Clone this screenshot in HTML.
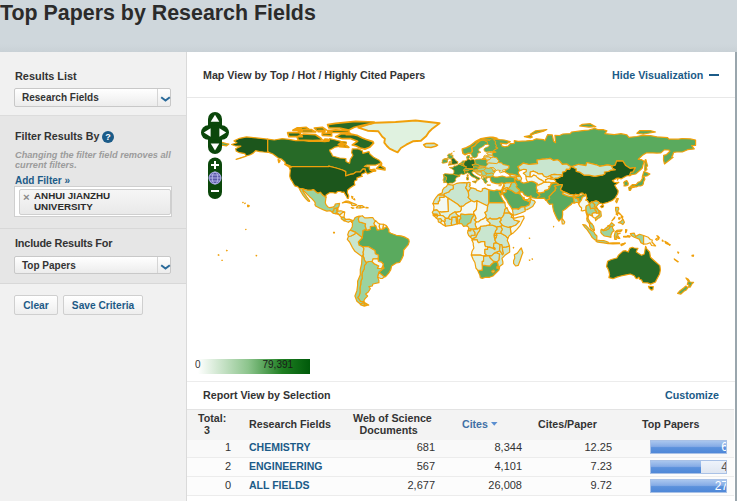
<!DOCTYPE html>
<html><head><meta charset="utf-8">
<style>
*{margin:0;padding:0;box-sizing:border-box}
html,body{width:737px;height:501px;overflow:hidden;background:#f0f0f0;font-family:"Liberation Sans",sans-serif;color:#333;position:relative}
.a{position:absolute;white-space:nowrap}
.hdr{left:0;top:0;width:737px;height:52px;background:linear-gradient(#cfd7dc 85%,#c9d1d6)}
.title{left:0;top:0;font-size:21.4px;font-weight:bold;color:#2b2b2b;line-height:26px}
.side{left:0;top:52px;width:186px;height:449px;background:#f1f1f1}
.sbr{left:186px;top:52px;width:1px;height:449px;background:#dadada}
.sec2{left:0;top:114.5px;width:186px;height:113.5px;background:#e6e6e6;border-top:1.5px solid #dcdcdc}
.sec3{left:0;top:228px;width:186px;height:56px;background:#e6e6e6;border-top:1px solid #d8d8d8;border-bottom:1px solid #d8d8d8}
.lbl{font-size:10.9px;font-weight:bold;color:#333}
.sel{background:linear-gradient(#fff,#ececec);border:1px solid #c8c8c8;border-radius:2px}
.sel .t{position:absolute;left:7px;font-size:10px;font-weight:bold;color:#333}
.sel .dv{position:absolute;right:0;top:0;bottom:0;width:13px;border-left:1px solid #d5d5d5}
.btn{background:linear-gradient(#fff,#eee);border:1px solid #cfcfcf;border-radius:2px;font-size:10.2px;font-weight:bold;color:#1d5a86;text-align:center}
.main{left:187px;top:52px;width:548px;height:449px;background:#fff}
.rb{left:735px;top:52px;width:2px;height:449px;background:#9aa6ad}
.blue{color:#1b5b88}
.th{font-size:10.7px;font-weight:bold;color:#333}
.num{font-size:11px;color:#333;text-align:right}
.bar{left:650px;width:77px;height:14px;background:linear-gradient(#eef3fb,#dfe6f1);border:1px solid #a9c1e6;overflow:hidden}
.fill{position:absolute;left:0;top:0;bottom:0;background:linear-gradient(#a9c6ee,#86ace6 45%,#5b91dc 55%,#4f88d8)}
.bn{position:absolute;right:-2px;top:0;font-size:12px;color:#fff;line-height:13px}
</style></head><body>
<div class="a hdr"></div>
<div class="a title">Top Papers by Research Fields</div>
<div class="a side"></div>
<div class="a sec2"></div>
<div class="a sec3"></div>
<div class="a sbr"></div>

<div class="a lbl" style="left:15px;top:70px">Results List</div>
<div class="a sel" style="left:14px;top:88px;width:157px;height:19px"><span class="t" style="top:3px">Research Fields</span><div class="dv"><svg style="position:absolute;left:1.5px;top:6.5px" width="11" height="6"><path d="M1.2,1.2L5.5,4.6L9.8,1.2" fill="none" stroke="#2a6a9a" stroke-width="2"/></svg></div></div>

<div class="a lbl" style="left:15px;top:130px;font-size:10.7px">Filter Results By</div>
<div class="a" style="left:102px;top:131px;width:12px;height:12px;border-radius:50%;background:#1b5b88;color:#fff;font-size:9px;font-weight:bold;text-align:center;line-height:12px">?</div>
<div class="a" style="left:15px;top:149.5px;font-size:9.2px;font-style:italic;font-weight:bold;color:#9c9c9c;line-height:10.4px">Changing the filter field removes all<br>current filters.</div>
<div class="a blue" style="left:15px;top:175px;font-size:10px;font-weight:bold">Add Filter »</div>
<div class="a" style="left:14px;top:186px;width:158px;height:31px;background:#fff;border:1px solid #cfcfcf"></div>
<div class="a" style="left:19px;top:189px;width:152px;height:26px;background:linear-gradient(#f6f6f6,#e9e9e9);border:1px solid #cfcfcf;border-radius:2px"></div>
<div class="a" style="left:23px;top:190px;font-size:11.5px;line-height:14px;color:#8a8a8a;font-weight:bold">×</div>
<div class="a" style="left:34px;top:191px;font-size:9.8px;font-weight:bold;color:#2b2b2b;line-height:10.5px">ANHUI JIANZHU<br>UNIVERSITY</div>

<div class="a lbl" style="left:15px;top:237px;letter-spacing:-0.2px">Include Results For</div>
<div class="a sel" style="left:14px;top:256px;width:157px;height:18px"><span class="t" style="top:2.5px">Top Papers</span><div class="dv"><svg style="position:absolute;left:1.5px;top:6.5px" width="11" height="6"><path d="M1.2,1.2L5.5,4.6L9.8,1.2" fill="none" stroke="#2a6a9a" stroke-width="2"/></svg></div></div>

<div class="a btn" style="left:14px;top:295px;width:44px;height:20px;line-height:20px">Clear</div>
<div class="a btn" style="left:63px;top:295px;width:80px;height:20px;line-height:20px">Save Criteria</div>

<div class="a main"></div>
<div class="a rb"></div>
<div class="a th" style="left:203px;top:69px">Map View by Top / Hot / Highly Cited Papers</div>
<div class="a blue" style="left:612px;top:69px;font-size:10.7px;font-weight:bold">Hide Visualization</div>
<div class="a" style="left:709px;top:74px;width:10px;height:2px;background:#1b5b88"></div>
<div class="a" style="left:187px;top:97px;width:548px;height:1px;background:#e8e8e8"></div>

<!-- MAP --><svg class="a" style="left:0;top:0" width="737" height="501" viewBox="0 0 737 501"><defs><clipPath id="mc"><rect x="187" y="99" width="547" height="282"/></clipPath></defs><g clip-path="url(#mc)" stroke="#f0a00a" stroke-width="1.2" stroke-linejoin="round"><path fill="#5aaa5e" d="M496.7,138.9 499.6,139.6 504.3,140.0 510.3,141.7 506.3,143.9 500.3,143.2 501.6,144.7 502.0,146.1 504.9,146.8 508.3,146.0 510.3,143.7 514.3,143.3 514.3,140.7 518.3,141.3 526.3,140.9 532.9,140.3 536.3,138.8 543.6,139.6 544.9,140.7 547.6,134.7 552.3,134.9 553.6,141.3 555.6,142.7 554.9,135.3 559.6,135.5 562.9,134.0 570.3,133.6 571.6,132.0 582.3,130.7 588.9,130.0 594.7,128.4 598.3,129.7 603.6,129.7 606.9,130.9 604.9,133.7 614.3,134.7 620.9,133.7 626.9,134.9 628.9,137.3 636.9,136.5 642.3,135.3 650.3,135.6 656.9,136.8 667.6,137.6 668.9,139.1 678.3,139.2 682.3,138.5 690.3,138.9 695.6,140.0 695.6,145.3 691.6,145.7 694.3,148.9 687.6,149.7 682.3,152.0 676.9,152.0 673.6,152.3 672.9,154.9 671.6,157.1 673.2,157.3 664.5,164.0 663.5,160.0 663.6,155.3 666.3,154.7 669.9,151.2 668.9,150.0 664.3,149.9 660.9,152.9 656.9,153.1 652.9,152.9 646.3,152.9 642.9,154.9 638.3,159.3 641.6,159.7 644.1,161.3 642.9,165.3 642.3,168.0 640.3,170.0 635.6,174.0 631.6,174.7 629.9,175.6 629.7,174.8 630.7,172.1 632.9,171.9 635.2,167.6 630.3,168.4 625.7,165.6 622.9,161.1 616.7,160.9 615.3,165.1 612.7,166.0 611.2,165.6 607.6,164.9 599.6,166.3 596.3,164.8 586.7,162.5 586.0,165.6 578.7,164.3 572.9,166.3 572.0,166.5 569.6,166.0 566.7,164.0 562.3,164.3 559.5,160.9 557.6,159.7 553.6,160.5 550.0,158.3 546.9,158.8 542.9,159.2 536.9,160.0 537.6,163.6 532.9,164.1 528.9,164.5 523.3,163.1 520.5,165.2 517.9,166.7 518.7,168.0 519.6,170.0 521.1,170.1 518.9,171.3 518.3,172.9 519.2,174.7 520.3,176.3 517.9,176.3 515.6,175.1 512.9,174.3 508.9,174.1 506.3,172.8 504.4,171.6 506.5,169.5 508.7,168.3 508.9,165.9 506.3,165.3 502.8,164.5 501.5,162.9 498.0,162.5 498.9,160.7 497.6,159.7 496.7,157.9 493.2,157.1 492.5,155.3 492.3,153.5 492.9,152.7 495.9,152.1 493.6,151.3 492.7,151.3 494.9,149.6 497.6,148.1 495.6,147.2 496.3,145.6 495.1,143.6 495.6,141.7 493.7,140.1 494.1,138.9ZM481.7,159.5 486.0,159.5 486.0,158.7 483.9,158.3 482.1,158.8ZM524.3,136.7 530.3,137.9 532.3,137.1 530.3,134.3 535.6,130.8 546.9,129.5 543.6,131.2 535.6,133.3 530.9,135.3ZM579.6,126.0 588.9,127.1 595.9,126.7 590.3,123.7 582.3,124.3ZM636.9,133.3 643.6,134.0 655.6,132.0 650.3,130.7 639.6,130.7ZM644.9,170.7 646.9,169.6 646.3,166.7 647.6,166.0 646.3,161.3 645.9,159.6 645.1,160.0 644.9,164.3 644.7,170.0Z"/><path fill="#276a27" d="M267.6,139.2 274.3,140.0 282.3,138.7 288.9,139.3 295.6,140.7 302.3,140.3 308.9,141.3 316.9,141.1 324.9,141.6 328.9,141.1 329.6,138.7 335.6,140.0 340.9,141.3 346.3,142.0 346.3,143.3 340.9,144.7 339.2,146.4 334.7,147.2 332.3,148.7 329.6,150.0 330.3,152.0 331.6,153.7 332.5,156.0 339.6,158.0 345.9,158.5 346.0,161.5 349.6,163.3 350.3,159.3 352.9,155.3 351.6,152.7 352.3,148.9 358.3,148.9 362.3,150.7 362.9,153.3 368.9,151.6 369.9,154.0 373.6,157.3 379.2,160.3 381.3,162.5 379.6,163.5 375.6,165.1 366.9,165.1 364.3,166.5 369.6,166.9 369.2,168.9 373.6,171.3 367.6,173.9 366.3,172.3 365.2,171.1 365.2,169.2 363.3,168.8 362.3,169.7 360.3,172.0 356.0,172.0 353.2,173.9 350.3,174.4 345.6,176.0 345.7,171.6 342.5,170.0 336.1,168.0 328.7,166.1 328.7,166.7 291.6,166.7 289.3,165.6 285.6,164.0 284.9,162.0 282.3,159.7 281.5,159.1 278.3,158.0 275.6,156.0 272.9,154.0 268.9,152.4 267.6,151.6Z"/><path fill="#1c561c" d="M289.3,167.5 291.6,166.7 328.7,166.7 328.7,166.1 336.1,168.0 342.5,170.0 345.7,171.6 345.6,176.0 350.3,174.4 353.2,173.9 356.0,172.0 360.3,172.0 362.3,169.7 363.3,168.8 365.2,169.2 365.2,171.1 366.3,172.3 362.3,173.7 361.3,175.1 362.3,176.4 359.7,176.9 356.9,177.9 356.9,180.0 354.9,180.7 354.3,182.7 354.9,184.9 352.9,186.0 350.3,187.7 347.6,190.0 347.3,192.7 348.8,196.0 348.4,198.4 347.3,198.4 346.5,196.4 345.3,194.7 344.0,192.1 342.3,192.4 340.3,191.5 337.6,191.5 336.1,193.1 334.9,193.2 332.5,192.5 329.6,192.7 326.0,195.1 326.0,197.5 322.9,195.3 320.4,192.3 318.0,193.3 316.0,192.0 313.6,189.6 311.3,190.3 307.5,190.3 302.5,188.7 299.5,188.7 297.6,186.7 294.8,185.9 293.1,183.2 292.3,181.6 290.5,178.9 289.7,176.0 290.3,170.3ZM267.6,139.2 246.5,136.9 239.6,138.3 234.0,140.9 236.9,142.7 231.6,144.5 235.6,146.0 240.9,146.1 235.6,148.7 236.3,151.3 239.6,152.7 244.9,153.7 246.3,156.1 239.6,158.4 236.1,159.3 242.3,157.3 250.3,154.7 253.2,153.1 255.6,150.7 259.6,151.6 263.6,152.0 268.9,152.4 267.6,151.6ZM248.9,206.7 249.2,205.6 247.6,205.1 247.7,206.7ZM244.9,203.6 245.3,203.2 244.7,203.3ZM242.9,202.7 243.2,202.4 242.7,202.4Z"/><path fill="#1c561c" d="M562.5,176.0 562.5,172.0 565.6,171.3 566.3,169.1 569.6,169.3 570.3,167.3 572.0,166.5 572.9,167.3 576.3,168.7 576.3,171.3 579.6,172.0 584.0,175.1 588.9,175.2 594.9,176.4 598.3,175.6 602.3,175.2 604.9,173.7 604.3,172.0 608.3,171.5 610.9,170.1 615.2,169.7 612.7,168.5 611.2,165.6 612.7,166.0 615.3,165.1 616.7,160.9 622.9,161.1 625.7,165.6 630.3,168.4 635.2,167.6 632.9,171.9 630.7,172.1 629.7,174.8 629.9,175.6 628.3,175.5 626.3,176.0 623.6,177.5 621.3,178.8 618.5,178.1 617.2,180.0 617.6,180.1 618.4,178.0 616.3,178.4 614.3,179.7 612.4,180.5 614.0,182.1 614.9,182.5 618.9,182.3 616.9,183.7 614.7,185.3 616.7,188.5 618.1,190.5 618.1,192.0 617.6,194.0 615.1,198.1 612.3,200.5 607.9,202.3 603.6,203.5 602.5,204.5 601.7,203.3 599.6,203.2 597.9,201.5 596.0,200.9 592.9,202.0 591.3,202.1 590.5,203.5 588.9,203.2 587.5,200.7 585.7,200.1 586.9,198.4 585.7,194.1 585.5,194.7 583.6,194.3 582.8,193.2 580.9,193.2 578.3,194.9 575.3,194.4 574.0,195.5 573.1,194.8 570.3,194.7 566.9,193.1 563.9,191.9 560.9,190.4 560.5,188.5 561.3,187.7 562.3,184.7 559.3,184.7 556.7,183.1 555.5,182.3 555.6,180.7 553.7,179.3 555.3,178.0 557.6,178.1 560.3,176.7ZM600.4,206.4 602.3,205.2 603.6,205.9 602.9,207.3 601.6,207.7Z"/><path fill="#5aaa5e" d="M386.8,226.4 388.9,229.6 388.9,232.0 390.9,233.3 396.3,235.3 400.9,235.9 404.3,236.9 408.7,239.3 409.2,241.6 408.3,244.7 406.0,247.3 403.7,250.0 403.3,255.6 401.6,259.3 399.6,262.5 396.3,262.9 391.6,266.0 390.8,269.6 388.7,273.2 385.6,276.7 384.3,276.9 378.8,272.3 383.9,268.1 382.8,266.1 383.2,264.0 381.5,262.1 378.4,261.5 378.0,258.9 378.5,255.3 375.3,253.7 374.9,250.4 368.5,246.7 362.8,246.7 359.1,245.3 358.3,242.0 362.3,237.6 362.9,230.5 366.3,229.1 366.4,230.4 370.3,229.3 370.3,226.7 374.3,226.0 374.7,225.1 376.0,226.1 377.3,230.0 380.3,229.5 382.9,228.9Z"/><path fill="#276a27" d="M606.5,266.7 607.6,261.3 611.3,259.5 616.9,258.0 618.5,255.1 622.9,251.1 625.6,250.7 628.3,252.0 629.6,248.4 632.3,247.3 634.3,248.0 638.0,248.3 636.7,250.7 636.3,252.0 641.6,255.3 644.3,254.0 645.6,246.3 646.9,249.1 649.6,252.0 650.5,257.3 654.3,260.7 659.9,265.6 660.4,270.0 659.6,274.0 656.0,280.7 655.5,282.0 650.7,284.1 647.6,282.9 642.9,282.7 641.6,280.0 639.6,279.3 638.9,277.3 636.9,278.7 635.6,278.0 634.3,275.7 630.3,274.0 624.9,275.1 620.9,276.0 616.9,277.1 612.9,278.7 608.9,277.7 609.6,274.7 608.9,271.3 607.6,268.0ZM648.5,286.3 653.3,286.5 652.9,289.6 651.3,290.1 649.2,288.3Z"/><path fill="#e0f2e0" stroke-width="1.9" d="M358.3,127.7 367.6,124.7 375.6,122.7 395.6,122.0 415.6,120.5 428.9,122.0 439.6,123.3 431.6,129.3 428.9,132.0 426.3,136.0 420.9,140.7 412.9,141.3 406.3,144.7 400.9,148.0 397.6,152.3 394.3,150.9 389.6,148.7 386.9,146.0 384.3,142.7 384.9,138.7 382.3,136.7 378.3,131.3 367.6,130.7Z"/><path fill="#276a27" stroke-width="1.7" d="M373.6,143.2 369.6,147.3 364.9,149.1 360.3,148.0 356.3,146.0 352.3,144.9 357.6,141.3 350.9,138.7 342.3,138.7 335.6,136.7 340.9,133.9 348.9,133.7 356.9,135.3 362.3,138.0 365.6,139.3 372.9,141.6ZM374.3,122.0 355.6,121.3 335.6,123.3 327.6,124.7 328.9,128.0 339.6,128.0 348.9,130.0 354.3,127.3 362.3,125.3 371.6,123.3ZM348.9,132.7 332.9,132.3 327.6,130.7 335.6,129.9 348.9,130.7ZM322.3,140.0 312.9,140.5 298.3,140.0 296.9,136.7 303.6,134.0 315.6,134.7 320.9,138.3ZM302.3,136.7 288.9,136.7 287.6,132.7 299.6,132.7ZM315.6,132.0 298.3,132.0 299.6,130.0 311.6,129.7ZM348.9,147.3 339.6,146.7 340.9,144.0 346.3,145.3ZM331.6,136.0 322.3,135.3 322.3,133.3 331.6,133.3ZM326.3,130.0 316.9,130.7 314.3,128.0 322.3,127.3ZM308.9,129.3 300.9,130.0 296.9,128.0 306.3,127.3ZM376.5,168.5 381.6,163.3 381.2,166.0 384.9,168.0 384.9,169.9 380.9,169.1ZM284.9,164.3 290.9,167.5 288.3,166.4ZM278.3,159.7 279.9,160.7 278.9,162.4ZM370.3,170.0 374.3,169.3 375.6,170.8 372.9,171.2ZM351.6,134.7 346.3,134.7 350.3,133.3ZM328.9,140.7 323.6,140.3 324.9,139.2 328.3,139.3ZM331.6,132.5 327.6,132.3 328.3,131.2 330.9,131.5ZM302.3,130.4 292.9,130.3 295.6,128.7 300.9,128.9ZM324.9,131.6 318.3,131.7 318.3,130.4 324.9,130.3ZM343.6,145.1 338.3,144.7 340.9,142.7 345.6,143.7Z"/><path fill="#c9e6cf" d="M572.0,166.5 569.6,166.0 566.7,164.0 562.3,164.3 559.5,160.9 557.6,159.7 553.6,160.5 550.0,158.3 546.9,158.8 542.9,159.2 536.9,160.0 537.6,163.6 532.9,164.1 528.9,164.5 523.3,163.1 520.5,165.2 517.9,166.7 518.7,168.0 519.6,170.0 521.1,170.1 523.6,169.3 526.3,169.7 526.3,171.6 524.0,172.7 523.3,173.3 525.6,175.1 526.0,176.3 530.1,176.9 530.3,172.0 533.6,171.2 536.9,172.8 538.3,174.0 542.1,173.7 543.6,176.0 546.3,177.3 547.6,176.8 550.1,175.7 551.3,174.9 554.3,174.4 556.9,174.7 561.2,174.9 562.5,176.0 562.5,172.0 565.6,171.3 566.3,169.1 569.6,169.3 570.3,167.3Z"/><path fill="#9bd3a0" d="M366.0,262.4 368.9,261.5 371.9,261.3 372.1,261.6 374.3,263.7 378.8,266.0 377.5,268.4 381.5,268.5 382.8,266.1 383.9,268.1 378.8,272.3 378.0,276.1 377.7,277.3 378.9,280.4 378.9,282.7 372.9,284.0 372.3,286.0 368.9,286.7 370.3,288.7 368.3,292.0 365.6,294.0 367.6,296.0 364.9,298.9 363.6,301.3 364.1,301.7 360.3,301.3 359.2,299.3 357.7,297.6 359.2,295.3 359.9,293.3 360.1,290.7 359.9,288.0 360.7,284.7 360.9,281.3 362.3,278.0 361.9,274.7 362.5,272.0 364.3,268.7 364.5,265.3 366.3,263.3ZM364.1,302.3 368.7,305.1 364.1,305.2Z"/><path fill="#5aaa5e" d="M546.5,200.4 547.6,202.3 549.6,204.3 552.7,204.0 552.7,206.7 553.6,210.9 555.3,214.9 557.2,218.9 558.9,221.2 559.9,220.1 562.1,218.3 562.7,214.4 562.5,210.9 565.3,209.3 568.7,206.3 571.5,204.3 571.7,203.2 574.3,202.8 574.3,196.9 578.3,196.3 580.9,195.2 583.6,194.3 585.5,194.7 584.9,196.0 582.3,197.3 581.5,199.9 580.1,202.0 579.1,202.7 578.7,198.7 575.6,198.4 573.2,196.7 572.9,195.3 568.9,196.0 564.9,194.9 562.7,193.9 563.6,191.7 560.9,190.4 560.5,188.5 561.3,187.7 562.3,184.7 559.3,184.7 554.3,186.0 556.1,188.1 555.1,188.7 555.1,190.5 552.9,192.4 550.9,194.7 548.9,196.7 549.6,198.7Z"/><path fill="#c9e6cf" d="M452.7,185.2 456.9,183.3 459.6,182.9 464.3,182.7 467.1,182.8 466.7,185.9 465.6,187.7 468.3,191.7 468.8,196.0 468.1,197.3 471.5,200.7 465.5,204.1 463.3,206.1 461.2,206.4 459.9,206.7 458.0,204.5 449.1,198.7 444.0,195.6 444.0,193.7 448.7,192.0 450.7,189.7 453.3,188.7 453.2,186.0Z"/><path fill="#c9e6cf" d="M471.9,240.0 473.2,239.9 477.2,239.9 477.6,241.7 478.9,242.8 481.5,241.6 484.7,241.7 484.7,244.7 485.5,246.7 487.6,246.7 488.1,247.3 489.5,247.1 491.5,247.9 493.2,248.4 494.9,249.7 495.2,248.3 493.5,247.1 493.9,243.3 496.4,242.9 494.9,240.0 494.5,237.9 494.3,235.7 494.3,233.9 495.1,233.9 495.5,231.2 497.2,228.9 496.7,227.3 494.9,226.0 492.1,225.2 489.3,224.9 486.0,225.7 482.7,226.0 480.4,226.3 480.4,227.3 479.5,230.7 477.3,233.7 475.9,237.1 473.2,238.4Z"/><path fill="#c9e6cf" d="M572.7,166.4 578.7,164.3 586.0,165.6 586.7,162.5 596.3,164.8 599.6,166.3 607.6,164.9 611.2,165.6 612.7,168.5 615.2,169.7 610.9,170.1 608.3,171.5 604.3,172.0 604.9,173.7 602.3,175.2 598.3,175.6 594.9,176.4 588.9,175.2 584.0,175.1 579.6,172.0 576.3,171.3 576.3,168.7 572.9,167.3Z"/><path fill="#9bd3a0" d="M299.5,188.7 302.5,188.7 307.5,190.3 311.3,190.3 313.6,189.6 316.0,192.0 318.0,193.3 320.4,192.3 322.9,195.3 326.0,197.5 325.3,202.7 326.0,204.7 327.6,206.7 329.6,207.7 332.9,207.2 334.9,205.6 335.2,204.0 339.6,203.3 338.9,206.7 337.9,207.5 336.8,208.3 334.4,208.3 333.7,210.5 332.7,211.6 332.7,212.7 330.3,210.7 326.9,211.1 323.6,209.9 320.3,208.5 315.6,206.0 314.9,204.5 315.3,203.1 314.3,201.3 311.6,198.4 309.6,196.7 307.6,194.7 305.2,192.1 302.5,189.7 302.8,191.2 304.7,193.9 306.9,197.1 309.5,200.5 309.6,201.3 308.4,201.2 305.9,198.9 303.3,195.7 301.2,192.3 299.9,189.9Z"/><path fill="#5aaa5e" d="M502.1,192.8 504.3,192.7 505.6,192.0 506.3,191.3 504.9,190.0 507.9,189.1 511.6,190.5 515.2,193.1 517.6,193.2 520.1,194.0 521.6,196.0 522.5,197.1 523.3,198.9 524.4,199.7 529.6,201.7 529.9,202.7 528.9,205.3 524.9,206.7 520.9,207.2 518.3,209.5 517.5,208.9 514.3,208.8 513.2,208.9 512.5,209.9 510.7,206.7 508.7,204.0 507.6,202.1 506.7,200.0 505.2,198.3 504.3,196.7 502.9,194.7Z"/><path fill="#c9e6cf" d="M488.9,202.7 504.8,202.7 505.5,206.9 507.1,208.0 504.9,209.3 504.3,212.9 503.7,215.1 502.3,217.3 501.2,217.9 500.9,219.3 499.6,217.7 496.7,219.1 492.0,219.2 489.9,218.1 487.1,220.4 486.9,218.7 485.5,217.3 486.1,215.2 484.7,212.4 486.9,210.9 487.6,206.0 487.6,205.3Z"/><path fill="#5aaa5e" d="M514.4,179.5 515.3,182.4 516.3,184.1 516.9,185.2 516.1,186.7 517.2,188.0 519.3,189.7 519.6,191.3 520.3,192.1 522.4,191.9 524.1,194.8 526.9,196.3 529.6,196.7 530.9,195.7 532.1,197.7 534.9,198.1 537.7,198.4 537.9,196.7 539.9,195.7 539.3,194.3 536.8,192.3 537.9,190.1 536.8,190.0 536.3,187.2 536.8,186.3 537.2,184.5 537.2,183.3 536.1,183.2 534.5,182.0 532.0,181.3 529.5,181.5 527.5,182.3 523.6,183.1 520.9,181.9 520.4,180.8 519.6,180.3 517.6,180.0 515.3,179.1Z"/><path fill="#9bd3a0" d="M600.9,230.0 601.7,229.3 603.6,230.7 606.3,230.0 608.9,228.7 610.3,226.4 612.5,226.4 612.5,228.0 614.1,230.8 612.3,232.0 610.9,235.3 610.9,237.3 608.3,236.7 604.3,236.0 602.3,234.4 600.9,232.7ZM582.7,224.5 585.6,225.1 588.9,228.7 594.0,232.0 594.9,234.0 596.9,236.0 596.8,239.9 594.9,239.9 592.0,237.3 589.6,233.3 587.1,229.7 584.9,227.3ZM595.9,241.1 596.9,240.0 600.3,240.7 603.6,240.5 605.9,241.2 608.3,242.3 608.1,243.6 603.6,242.9 599.6,242.4 596.9,241.9ZM614.8,239.3 614.3,236.0 615.3,231.7 616.9,230.4 622.1,229.9 620.9,231.3 616.3,231.5 617.6,233.3 620.3,233.2 617.3,234.4 618.3,236.5 619.9,238.3 618.0,238.4 616.1,235.9 616.3,239.5ZM630.3,233.7 634.3,233.2 635.6,236.4 639.6,234.3 643.6,235.5 643.6,244.1 640.9,242.7 639.2,239.1 634.3,237.2 631.6,235.7ZM608.9,243.1 612.9,242.9 619.6,242.9 619.6,243.7 612.9,244.0 608.9,243.7ZM620.9,244.3 625.2,243.1 623.6,244.4 621.2,245.6ZM625.6,229.6 626.9,229.9 626.3,232.0 625.6,232.7ZM623.6,236.3 626.3,236.3 626.3,237.1 623.6,236.9ZM627.6,235.7 630.3,236.0 629.6,237.1 626.3,236.7Z"/><path fill="#c9e6cf" d="M470.9,187.9 472.9,188.1 476.0,189.1 476.5,190.1 480.9,191.6 482.3,190.7 482.3,188.9 484.9,188.1 488.9,189.9 488.8,192.0 488.9,202.7 487.6,205.3 487.6,206.0 476.9,200.7 474.3,202.0 471.5,200.7 468.1,197.3 468.8,196.0 468.3,191.7 469.3,190.0Z"/><path fill="#5aaa5e" d="M477.6,270.1 480.9,270.4 482.3,269.9 482.3,265.1 486.3,265.7 489.9,266.0 491.6,263.9 494.8,261.6 497.2,261.7 498.1,264.5 498.3,266.7 499.5,267.9 498.9,270.0 496.9,272.0 492.9,276.0 489.6,277.3 485.6,277.3 482.3,278.4 480.3,277.6 479.9,275.3 478.7,272.7Z"/><path fill="#c9e6cf" d="M348.5,236.5 347.3,239.3 349.6,242.0 352.3,247.3 354.9,251.3 359.6,254.7 362.0,256.4 362.9,255.3 363.6,254.3 363.1,252.5 364.0,248.7 362.8,246.7 359.1,245.3 358.3,242.0 362.3,237.6 357.6,233.7 355.3,232.1 354.9,234.0 350.9,236.0Z"/><path fill="#f3f9f1" d="M471.5,200.7 474.3,202.0 476.9,200.7 476.9,204.4 476.3,209.5 473.6,212.0 473.7,213.3 474.4,214.5 471.9,214.3 468.9,214.3 464.9,214.7 460.9,214.0 460.4,216.4 458.8,216.1 456.9,214.7 455.9,213.3 455.9,212.1 460.4,211.3 461.2,209.6 461.2,206.4 463.3,206.1 465.5,204.1Z"/><path fill="#f3f9f1" d="M474.4,214.5 473.7,213.3 473.6,212.0 476.3,209.5 476.9,204.4 476.9,200.7 487.6,206.0 486.9,210.9 484.7,212.4 486.1,215.2 485.5,217.3 483.6,218.9 480.8,220.0 478.3,221.9 476.3,222.0 474.1,219.7 475.9,218.7 475.5,216.7Z"/><path fill="#e0f2e0" d="M449.1,198.7 458.0,204.5 459.9,206.7 461.2,206.4 461.2,209.6 460.4,211.3 455.9,212.1 454.8,211.9 452.9,213.1 451.5,213.9 449.7,215.3 448.5,218.1 445.5,218.4 444.5,217.1 442.8,215.7 440.4,215.5 439.3,212.4 440.0,211.5 441.3,211.9 448.3,211.3 447.7,198.8Z"/><path fill="#f3f9f1" d="M471.9,240.0 473.2,239.9 477.2,239.9 477.6,241.7 478.9,242.8 481.5,241.6 484.7,241.7 484.7,244.7 485.5,246.7 487.6,246.7 487.6,249.3 484.9,249.3 484.9,253.6 486.7,255.3 483.6,256.0 480.3,255.2 474.5,255.2 471.3,255.1 472.0,251.3 473.9,248.0 473.2,244.7 473.3,243.2Z"/><path fill="#9bd3a0" d="M351.7,222.4 354.3,219.3 354.9,217.7 356.7,216.9 359.2,216.0 360.5,216.3 358.9,217.3 358.3,219.3 359.3,222.1 362.3,222.7 365.6,223.9 365.2,226.0 366.3,229.1 362.9,230.5 362.3,237.6 357.6,233.7 355.3,232.1 352.0,230.9 350.3,230.3 352.3,226.7 352.5,222.9Z"/><path fill="#c9e6cf" d="M504.3,212.9 505.6,212.9 508.9,212.7 512.1,215.3 511.3,217.3 512.7,217.5 514.3,220.0 519.5,221.3 515.6,225.3 511.6,226.7 510.3,226.7 508.3,227.5 503.6,226.0 502.3,225.3 499.6,221.6 500.9,220.5 500.9,219.3 501.2,217.9 502.3,217.3 503.7,215.1Z"/><path fill="#f3f9f1" d="M432.9,203.6 438.3,203.6 438.3,201.3 439.6,200.7 439.6,197.3 444.0,197.3 444.0,195.6 449.1,198.7 447.7,198.8 448.3,211.3 441.3,211.9 440.0,211.5 439.3,212.4 436.9,209.9 433.6,210.4 434.0,206.7 433.6,205.3Z"/><path fill="#c9e6cf" d="M362.8,246.7 368.5,246.7 374.9,250.4 375.3,253.7 378.5,255.3 378.0,258.9 373.2,258.8 372.1,261.6 371.9,261.3 368.9,261.5 366.0,262.4 364.5,260.3 363.9,258.0 362.9,255.3 363.6,254.3 363.1,252.5 364.0,248.7Z"/><path fill="#5aaa5e" d="M488.9,189.9 491.6,190.3 494.3,190.8 496.9,189.9 498.7,190.3 501.2,190.3 502.1,192.7 501.2,194.9 499.1,192.1 500.3,195.3 502.9,200.0 504.8,202.7 497.5,202.7 488.9,202.7Z"/><path fill="#9bd3a0" d="M362.9,255.3 362.0,256.4 361.6,264.0 360.3,269.3 360.3,274.7 357.6,281.3 357.6,285.3 356.9,290.7 354.9,296.0 356.9,301.3 360.3,304.0 364.1,302.3 364.1,301.7 360.3,301.3 359.2,299.3 357.7,297.6 359.2,295.3 359.9,293.3 360.1,290.7 359.9,288.0 360.7,284.7 360.9,281.3 362.3,278.0 361.9,274.7 362.5,272.0 364.3,268.7 364.5,265.3 366.3,263.3 366.0,262.4 364.5,260.3 363.9,258.0ZM364.1,305.2 366.9,305.5 364.3,306.1 360.3,304.7 364.1,302.3Z"/><path fill="#5aaa5e" d="M490.4,177.9 490.9,176.3 492.9,176.0 494.4,177.1 497.6,177.1 502.3,176.0 506.3,177.3 510.9,176.7 513.6,177.2 515.3,179.1 514.4,179.5 515.3,182.4 512.1,182.5 508.9,182.9 506.3,182.9 504.4,183.7 503.5,183.3 501.6,182.9 498.9,183.9 496.3,183.6 494.3,183.1 492.0,182.4 490.7,180.7 490.4,179.3Z"/><path fill="#5aaa5e" d="M537.7,198.4 540.3,198.4 544.3,198.1 545.6,200.3 546.5,200.4 549.6,198.7 548.9,196.7 550.9,194.7 552.9,192.4 555.1,190.5 555.1,188.7 556.1,188.1 554.3,186.0 559.3,184.7 556.7,183.1 553.9,182.8 550.9,184.1 550.4,185.7 548.4,186.7 549.7,187.1 548.0,189.5 544.8,190.3 544.0,192.1 541.3,192.7 538.9,192.8 536.8,192.3 539.3,194.3 539.9,195.7 537.9,196.7Z"/><path fill="#5aaa5e" stroke-width="0.9" d="M470.3,153.3 471.6,155.3 472.7,157.3 474.7,158.0 476.9,156.9 477.7,155.3 477.7,153.3 480.9,152.3 478.7,150.7 478.9,148.7 481.6,147.3 484.3,145.6 484.9,144.5 487.7,144.3 487.2,141.7 482.9,139.9 479.6,140.9 476.3,143.6 474.8,145.7 471.6,147.3 472.0,149.3 472.3,151.3 470.9,152.9Z"/><path fill="#c9e6cf" d="M496.5,233.3 500.9,233.3 505.9,236.1 507.9,238.3 507.3,240.7 508.3,242.7 509.5,246.0 506.3,247.1 502.3,247.3 501.7,244.7 499.6,244.5 497.2,243.3 496.4,242.9 494.9,240.0 496.1,237.6 496.7,235.2Z"/><path fill="#c9e6cf" d="M360.5,216.3 362.3,215.7 364.7,217.9 367.6,217.9 370.3,217.7 372.9,217.7 374.3,220.0 375.6,220.7 374.0,223.3 374.7,225.1 374.3,226.0 370.3,226.7 370.3,229.3 366.4,230.4 366.3,229.1 365.2,226.0 365.6,223.9 362.3,222.7 359.3,222.1 358.3,219.3 358.9,217.3Z"/><path fill="#c9e6cf" stroke-width="0.9" d="M485.7,166.5 487.7,164.3 487.1,163.3 488.9,162.8 492.9,163.2 496.4,163.6 498.0,162.5 501.5,162.9 502.8,164.5 506.3,165.3 508.9,165.9 508.7,168.3 506.5,169.2 502.3,170.3 502.9,171.6 504.3,171.6 500.3,172.8 498.9,171.5 500.5,170.7 497.9,170.0 495.6,170.9 495.2,171.7 493.2,171.3 495.6,170.0 494.5,168.5 492.9,167.6 491.1,167.7 488.8,168.4 486.1,168.1 485.2,167.5Z"/><path fill="#e0f2e0" d="M471.3,255.1 474.5,255.2 480.3,255.2 483.6,256.0 486.7,255.3 489.3,255.7 483.6,256.4 483.6,261.3 482.3,261.3 482.3,265.1 482.3,269.9 480.9,270.4 477.6,270.1 475.9,268.0 474.9,262.5 473.3,259.7Z"/><path fill="#9bd3a0" d="M459.2,223.6 459.2,220.0 460.7,218.3 460.4,216.4 460.9,214.0 464.9,214.7 468.9,214.3 471.9,214.3 474.4,214.5 473.7,215.6 471.6,219.1 470.7,222.7 468.5,223.5 467.3,224.8 466.9,225.9 464.9,226.1 463.6,226.3 461.6,223.6Z"/><path fill="#5aaa5e" stroke-width="1.5" d="M462.9,153.3 462.3,150.0 462.3,148.9 466.3,147.6 469.6,146.0 472.3,144.0 474.9,142.0 477.6,140.4 480.9,138.7 486.3,137.7 490.0,137.2 492.9,137.3 496.9,138.3 496.7,138.9 494.1,138.9 493.7,140.1 490.0,140.3 483.6,139.9 482.9,139.9 479.6,140.9 476.3,143.6 474.8,145.7 471.6,147.3 472.0,149.3 472.3,151.3 470.9,152.9 470.3,153.3 468.3,153.3 464.9,154.7Z"/><path fill="#338a3c" stroke-width="0.9" d="M449.3,167.5 453.6,167.2 453.9,165.9 455.9,166.0 457.7,165.1 458.9,163.9 461.2,164.9 462.3,165.3 463.7,166.0 466.5,166.7 465.7,168.5 464.8,168.7 463.6,170.3 464.9,170.8 464.4,171.9 465.6,173.6 463.6,174.5 461.3,174.0 459.7,174.7 459.9,175.5 455.6,175.1 453.2,174.1 453.9,172.7 454.0,170.7 452.5,169.1ZM467.1,174.7 468.3,174.8 468.0,176.8 467.1,176.3Z"/><path fill="#c9e6cf" d="M509.5,246.0 509.7,252.0 504.9,255.3 502.0,258.4 502.9,262.0 502.9,264.0 499.5,266.5 499.5,267.9 498.3,266.7 498.1,264.5 497.2,261.7 498.9,260.0 499.3,256.0 499.6,254.3 496.1,252.8 495.9,252.4 499.9,250.7 499.5,250.0 501.3,252.7 502.5,254.7 503.3,253.5 502.7,251.3 502.3,247.3 506.3,247.1Z"/><path fill="#c9e6cf" d="M484.9,249.3 487.6,249.3 487.6,246.7 488.1,247.3 489.5,247.1 491.5,247.9 493.2,248.4 494.9,249.7 495.2,248.3 493.5,247.1 493.9,243.3 496.4,242.9 497.2,243.3 499.6,244.5 500.1,246.0 499.5,248.8 499.9,250.7 495.9,252.4 494.1,253.3 491.6,255.9 489.3,255.7 486.7,255.3 484.9,253.6Z"/><path fill="#f3f9f1" d="M537.2,184.5 536.8,186.3 536.3,187.2 536.8,190.0 537.9,190.1 536.8,192.3 538.9,192.8 541.3,192.7 544.0,192.1 544.8,190.3 548.0,189.5 549.7,187.1 548.4,186.7 550.4,185.7 550.9,184.1 553.9,182.8 550.9,182.8 548.9,182.0 546.0,182.4 544.3,182.1 541.6,183.6 539.7,184.3 538.7,184.9Z"/><path fill="#5aaa5e" stroke-width="0.9" d="M482.9,139.9 487.2,141.7 487.7,144.3 489.3,145.2 488.4,146.7 485.6,147.7 484.0,148.9 484.3,151.1 486.1,152.1 489.6,151.6 492.7,151.3 494.9,149.6 497.6,148.1 495.6,147.2 496.3,145.6 495.1,143.6 495.6,141.7 493.7,140.1 494.1,138.9 491.6,138.7 490.0,140.3 483.6,139.9Z"/><path fill="#f3f9f1" d="M578.7,204.0 579.6,206.0 581.6,208.0 581.3,210.7 582.7,210.9 585.7,210.0 586.0,212.3 587.1,216.0 586.9,218.9 587.7,217.6 587.7,214.7 586.5,211.7 586.0,209.3 586.0,207.2 586.5,205.7 589.1,204.8 590.5,203.5 588.9,203.2 587.5,200.7 585.7,200.1 586.9,198.4 585.7,194.1 585.5,194.7 584.9,196.0 582.3,197.3 581.5,199.9 580.1,202.0 579.1,202.7Z"/><path fill="#f3f9f1" d="M512.7,217.5 514.9,218.1 518.3,217.2 523.7,216.1 524.1,218.1 522.3,221.3 520.3,225.3 516.9,229.3 513.6,232.7 511.1,234.3 510.3,228.3 511.6,226.7 515.6,225.3 519.5,221.3 514.3,220.0Z"/><path fill="#338a3c" stroke-width="0.9" d="M453.2,174.1 455.6,175.1 459.9,175.5 459.9,176.3 456.7,177.3 455.6,178.9 455.2,180.0 455.9,180.4 454.7,181.9 452.8,183.1 449.7,183.1 448.1,184.0 447.1,182.9 445.7,182.4 445.6,180.7 446.3,179.2 446.4,177.1 444.7,176.1 443.7,175.9 443.2,174.7 444.9,173.7 449.6,174.1Z"/><path fill="#c9e6cf" d="M521.3,248.0 522.9,252.7 522.0,254.7 520.0,260.7 518.3,265.3 515.6,266.0 513.6,263.3 513.6,260.7 514.8,258.0 514.3,254.7 517.3,253.1 519.6,250.0Z"/><path fill="#f3f9f1" d="M530.1,176.9 530.3,172.0 533.6,171.2 536.9,172.8 538.3,174.0 542.1,173.7 543.6,176.0 546.3,177.3 547.6,176.8 550.1,175.7 551.3,176.8 552.9,177.6 549.6,178.4 548.3,178.3 546.9,179.3 545.5,179.9 545.6,182.3 544.3,182.1 541.5,180.1 538.8,178.7 536.9,177.1 535.6,175.7 533.6,175.1 531.6,176.9Z"/><path fill="#f3f9f1" d="M475.1,223.7 475.6,226.1 477.2,229.2 480.4,227.3 480.4,226.3 482.7,226.0 486.0,225.7 489.3,224.9 490.3,223.3 488.1,221.1 487.1,220.4 486.9,218.7 485.5,217.3 483.6,218.9 480.8,220.0 478.3,221.9 476.3,222.0Z"/><path fill="#f3f9f1" d="M526.0,176.3 526.1,178.7 527.5,182.3 529.5,181.5 532.0,181.3 534.5,182.0 536.1,183.2 537.2,183.3 537.2,184.5 538.7,184.9 539.7,184.3 541.6,183.6 544.3,182.1 541.5,180.1 538.8,178.7 536.9,177.1 535.6,175.7 533.6,175.1 531.6,176.9 530.1,176.9Z"/><path fill="#c9e6cf" d="M487.1,220.4 489.9,218.1 492.0,219.2 496.7,219.1 499.6,217.7 500.9,219.3 500.9,220.5 499.6,221.6 502.3,225.3 500.8,226.4 497.2,226.9 496.7,227.3 494.9,226.0 492.1,225.2 489.3,224.9 490.3,223.3 488.1,221.1Z"/><path fill="#c9e6cf" d="M510.3,226.7 510.3,228.3 511.1,234.3 509.2,235.7 507.9,238.3 505.9,236.1 500.9,233.3 500.9,231.7 502.3,229.5 500.9,226.4 502.3,225.3 503.6,226.0 508.3,227.5Z"/><path fill="#276a27" stroke-width="0.9" d="M463.7,162.9 464.9,160.9 466.9,160.5 467.2,158.8 468.5,158.9 470.3,160.0 472.9,159.3 474.5,160.1 475.1,161.9 475.3,164.1 471.9,164.9 474.0,166.9 472.9,168.7 469.6,168.7 468.4,168.7 465.7,168.5 466.5,166.7 464.1,166.0 463.6,164.3Z"/><path fill="#c9e6cf" d="M482.3,261.3 483.6,261.3 483.6,256.4 489.3,255.7 490.3,258.0 492.9,260.7 494.8,261.6 491.6,263.9 489.9,266.0 486.3,265.7 482.3,265.1Z"/><path fill="#5aaa5e" d="M630.1,186.7 632.3,184.7 636.3,184.5 638.0,182.4 640.4,181.5 642.3,178.7 642.3,176.8 644.3,176.9 644.9,179.3 643.6,181.6 643.3,184.0 642.3,185.3 640.7,185.9 638.3,186.0 636.3,186.9 634.9,185.9 631.9,186.8ZM628.7,187.6 630.3,186.7 631.6,188.0 630.5,190.3 629.2,190.3ZM632.3,187.7 635.2,186.9 634.5,186.3 632.4,186.7ZM642.3,176.7 643.9,171.5 645.6,172.0 649.9,174.1 646.9,176.0 643.6,176.3Z"/><path fill="#9bd3a0" d="M586.5,205.7 589.1,204.8 590.1,206.0 590.5,208.7 592.4,208.1 594.9,208.4 595.2,210.1 596.4,211.2 596.3,212.7 593.6,212.8 592.1,213.9 592.8,216.4 590.3,215.1 588.9,214.1 587.9,218.0 589.3,220.9 590.7,222.8 591.7,223.7 589.3,223.3 587.1,220.9 586.9,218.9 587.7,217.6 587.7,214.7 586.5,211.7 586.0,209.3 586.0,207.2Z"/><path fill="#c9e6cf" d="M466.9,225.9 468.7,227.2 468.7,228.9 470.7,229.1 477.2,229.2 475.6,226.1 475.1,223.7 476.3,222.0 474.1,219.7 475.9,218.7 475.5,216.7 474.4,214.5 473.7,215.6 471.6,219.1 470.7,222.7 468.5,223.5 467.3,224.8Z"/><path fill="#5aaa5e" stroke-width="0.9" d="M474.5,160.1 477.6,159.3 480.4,159.1 481.7,159.5 486.0,159.5 486.9,160.1 487.1,162.0 486.5,162.4 487.7,164.3 485.7,166.5 480.7,166.0 477.3,164.4 475.3,164.1 475.1,161.9Z"/><path fill="#9bd3a0" d="M512.1,182.5 515.3,182.4 516.3,184.1 516.9,185.2 516.1,186.7 517.2,188.0 519.3,189.7 519.6,191.3 519.2,191.9 518.3,192.1 517.6,193.2 515.2,193.1 511.6,190.5 507.9,189.1 510.3,186.1 510.7,184.5Z"/><path fill="#c9e6cf" d="M447.7,184.3 452.7,185.2 453.2,186.0 453.3,188.7 450.7,189.7 448.7,192.0 444.0,193.7 444.0,195.1 438.0,195.1 438.9,194.4 442.3,192.9 442.5,190.1 444.3,187.7 446.5,186.5Z"/><path fill="#c9e6cf" d="M512.5,209.9 513.3,215.1 515.6,214.9 520.3,213.3 525.2,211.2 525.2,209.9 524.9,206.7 520.9,207.2 518.3,209.5 517.5,208.9 514.3,208.8 513.2,208.9Z"/><path fill="#f3f9f1" d="M643.6,235.5 648.3,237.3 650.3,239.5 652.3,240.0 651.9,242.0 655.6,246.0 651.6,245.5 650.0,242.7 646.9,244.0 643.6,244.1ZM655.6,239.3 658.3,237.6 658.7,239.3 656.9,240.3ZM656.9,235.7 658.3,236.3 659.6,238.0ZM662.3,240.0 663.3,241.1 662.3,241.1Z"/><path fill="#c9e6cf" d="M489.3,255.7 491.6,255.9 494.1,253.3 496.1,252.8 499.6,254.3 499.3,256.0 498.9,260.0 497.2,261.7 494.8,261.6 492.9,260.7 490.3,258.0Z"/><path fill="#338a3c" stroke-width="0.9" d="M465.6,173.6 467.3,172.8 469.3,173.5 470.3,175.3 472.3,176.8 474.3,177.6 476.4,178.7 476.9,181.3 477.6,179.1 478.5,179.9 480.3,178.5 476.9,176.8 474.5,175.3 472.1,173.1 472.0,171.6 473.9,171.2 473.9,170.0 471.9,169.3 469.6,169.6 467.6,170.7 464.9,170.8 464.4,171.9ZM472.1,181.5 476.4,180.9 475.7,183.1ZM466.5,177.2 468.4,177.3 468.4,179.9 466.8,180.0Z"/><path fill="#f3f9f1" d="M372.1,261.6 373.2,258.8 378.0,258.9 378.4,261.5 381.5,262.1 383.2,264.0 382.8,266.1 381.5,268.5 377.5,268.4 378.8,266.0 374.3,263.7Z"/><path fill="#c9e6cf" stroke-width="0.9" d="M486.9,160.1 489.6,159.6 491.1,157.7 493.2,157.1 496.7,157.9 497.6,159.7 498.9,160.7 498.0,162.5 496.4,163.6 492.9,163.2 488.9,162.8 487.1,163.3 486.5,162.4 487.1,162.0Z"/><path fill="#5aaa5e" d="M685.9,277.9 688.3,279.3 690.1,282.0 693.6,282.3 691.6,284.4 690.3,287.1 688.7,287.1 688.9,284.7 687.3,284.3 688.3,281.3ZM685.9,286.0 688.0,287.6 686.3,290.0 683.9,291.3 680.9,294.1 677.6,293.3 680.0,290.7 683.6,288.0Z"/><path fill="#9bd3a0" d="M599.6,203.2 597.9,204.4 596.4,206.8 598.3,209.9 600.8,211.5 601.3,216.0 599.6,217.7 598.0,218.3 595.6,220.5 595.3,218.1 597.2,216.4 598.9,215.3 599.1,212.7 598.7,210.7 597.5,209.3 595.3,207.2 594.1,206.3 594.9,204.7 591.7,202.1 592.9,202.0 596.0,200.9 597.9,201.5Z"/><path fill="#c9e6cf" d="M445.6,226.1 444.3,222.0 444.5,221.6 445.2,220.8 444.7,219.3 445.5,218.4 448.5,218.1 449.7,219.2 452.0,219.3 451.3,223.3 451.7,225.3Z"/><path fill="#c9e6cf" d="M525.2,209.9 527.1,209.6 529.3,208.5 531.3,207.2 532.7,206.5 533.7,204.7 535.3,202.1 533.9,200.5 532.1,200.1 530.8,198.8 530.3,199.9 529.9,202.7 528.9,205.3 524.9,206.7Z"/><path fill="#9bd3a0" stroke-width="0.9" d="M483.6,170.4 486.1,168.1 488.8,168.4 491.1,167.7 493.2,170.0 493.2,171.3 495.2,171.7 493.7,173.7 491.6,173.2 488.3,173.7 485.9,173.1 485.6,172.7 484.3,171.7Z"/><path fill="#c9e6cf" d="M438.0,195.1 444.0,195.1 444.0,197.3 439.6,197.3 439.6,200.7 438.3,201.3 438.3,203.6 432.9,203.6 434.3,200.0 436.3,197.2Z"/><path fill="#9bd3a0" d="M589.3,223.3 591.7,223.7 593.5,226.0 594.5,230.1 593.6,230.3 590.7,228.3 589.7,226.4ZM601.7,229.3 603.6,230.0 606.3,227.7 609.6,225.3 611.6,222.7 614.5,225.1 612.9,226.3 612.5,226.4 610.3,226.4 608.9,228.7 606.3,230.0 603.6,230.7Z"/><path fill="#c9e6cf" d="M470.4,237.3 472.1,238.7 473.2,238.4 475.9,237.1 477.3,233.7 479.5,230.7 480.4,227.3 477.2,229.2 474.5,228.9 473.2,230.4 474.8,232.4 474.9,235.2 471.3,235.3Z"/><path fill="#c9e6cf" stroke-width="1.5" d="M423.6,144.7 426.3,143.5 434.3,143.3 437.6,145.1 435.6,146.3 430.9,147.5 425.6,146.9Z"/><path fill="#5aaa5e" d="M215.6,145.3 215.6,140.0 220.9,142.0 226.3,143.6 228.9,144.0 226.3,146.0 222.3,145.1Z"/><path fill="#9bd3a0" d="M591.7,202.1 594.9,204.7 594.1,206.3 595.3,207.2 597.5,209.3 598.7,210.7 599.1,212.7 596.8,213.5 596.3,212.7 596.4,211.2 595.2,210.1 594.9,208.4 592.4,208.1 590.5,208.7 590.1,206.0 589.1,204.8 590.5,203.5 591.3,202.1Z"/><path fill="#c9e6cf" d="M448.5,218.1 449.7,215.3 451.5,213.9 452.9,213.1 454.8,211.9 455.9,212.1 455.9,213.3 456.9,214.7 458.8,216.1 456.8,217.3 455.5,217.2 451.9,217.3 452.0,219.3 449.7,219.2Z"/><path fill="#c9e6cf" d="M467.6,232.7 468.0,230.7 470.7,230.7 470.7,229.1 473.2,229.1 473.2,230.4 474.8,232.4 474.9,235.2 471.3,235.3 470.4,237.2 468.7,235.5Z"/><path fill="#9bd3a0" d="M615.6,207.3 618.5,207.3 618.8,209.3 617.6,211.3 620.9,214.7 618.9,213.6 616.4,212.9 615.6,210.0ZM618.3,222.7 621.3,220.9 622.9,219.1 624.4,222.3 622.9,224.5 620.9,223.2ZM618.9,217.6 620.3,218.0 619.6,219.3 618.5,218.9ZM621.2,215.3 622.9,216.7 622.3,218.3 621.3,217.3ZM617.6,215.3 617.2,214.0 616.0,214.1ZM611.9,220.8 614.9,216.9 614.5,218.3Z"/><path fill="#c9e6cf" d="M550.1,175.7 551.3,174.9 554.3,174.4 556.9,174.7 561.2,174.9 562.5,176.0 560.3,176.7 557.6,178.1 555.3,178.0 553.7,179.3 550.9,179.2 548.3,178.5 549.6,178.4 552.9,177.6 551.3,176.8Z"/><path fill="#c9e6cf" d="M451.7,225.3 451.3,223.3 452.0,219.3 451.9,217.3 455.5,217.2 456.3,218.0 456.4,221.3 457.2,223.9Z"/><path fill="#c9e6cf" d="M497.2,226.9 500.8,226.4 502.3,229.5 500.9,231.7 500.9,233.3 496.5,233.3 495.1,233.9 495.5,231.2 497.2,228.9 496.7,227.3Z"/><path fill="#c9e6cf" d="M503.9,184.3 504.4,183.7 506.3,182.9 508.9,182.9 512.1,182.5 510.7,184.5 510.3,186.1 507.9,189.1 507.3,187.5 503.6,188.9 503.3,187.6 504.4,185.9 503.5,185.3Z"/><path fill="#e0f2e0" d="M437.3,215.2 438.9,215.5 440.4,215.5 442.8,215.7 444.5,217.1 445.5,218.4 444.7,219.3 445.2,220.8 444.5,221.6 442.0,220.7 441.3,219.7 440.7,218.7 439.6,218.8 438.0,219.3 436.0,217.9 435.6,217.3 437.5,216.7Z"/><path fill="#276a27" stroke-width="0.9" d="M448.0,165.2 450.9,164.8 457.5,163.7 457.9,161.7 456.0,160.8 454.9,159.3 453.5,157.9 452.9,157.6 451.6,158.7 451.1,159.6 451.7,160.9 451.6,162.7 452.0,163.2 449.6,163.9Z"/><path fill="#c9e6cf" d="M433.6,210.4 436.9,209.9 439.3,212.4 440.4,215.5 438.9,215.5 437.3,215.2 433.3,215.5 433.2,214.0 432.3,212.4Z"/><path fill="#f3f9f1" d="M548.3,178.5 550.9,179.2 553.7,179.3 555.6,180.7 555.5,182.3 550.9,182.8 548.9,182.0 546.0,182.4 545.5,179.9 546.9,179.3 548.3,178.3Z"/><path fill="#f3f9f1" d="M375.6,220.7 377.6,222.7 379.6,224.0 379.3,226.7 380.3,229.5 377.3,230.0 376.0,226.1 374.7,225.1 374.0,223.3Z"/><path fill="#c9e6cf" d="M348.5,236.5 347.7,234.7 348.9,231.3 350.3,230.3 352.0,230.9 355.3,232.1 354.9,234.0 350.9,236.0Z"/><path fill="#c9e6cf" d="M467.1,182.8 468.9,182.3 470.3,182.8 469.6,184.5 470.4,185.1 469.2,186.4 470.9,187.9 469.3,190.0 468.3,191.7 465.6,187.7 466.7,185.9Z"/><path fill="#f3f9f1" d="M592.8,216.4 592.1,213.9 593.6,212.8 596.3,212.7 596.8,213.5 599.1,212.7 598.9,215.3 597.2,216.4 595.3,218.1 593.3,217.5Z"/><path fill="#5aaa5e" stroke-width="0.9" d="M482.3,179.1 483.6,177.9 483.6,177.5 486.3,176.9 490.7,176.4 490.3,177.6 487.6,177.6 486.9,178.7 485.7,178.3 486.3,180.1 487.6,181.3 486.0,183.5 484.5,182.8 483.9,180.9 482.7,179.6ZM486.9,184.9 490.7,185.1 488.9,185.3Z"/><path fill="#c9e6cf" d="M562.4,193.6 563.9,191.9 566.9,193.1 570.3,194.7 573.1,194.8 573.2,196.8 568.9,196.4 566.3,195.5 562.7,193.9Z"/><path fill="#9bd3a0" stroke-width="0.9" d="M485.6,172.7 485.9,173.1 488.3,173.7 491.6,173.2 493.7,173.7 492.8,176.0 490.7,176.4 486.3,176.9 485.5,175.6 486.3,174.4Z"/><path fill="#c9e6cf" d="M384.3,276.9 378.8,272.3 378.0,276.1 377.7,277.3 380.7,278.5 382.4,278.5Z"/><path fill="#9bd3a0" d="M574.0,203.2 576.3,202.4 578.0,202.3 578.7,204.0 579.1,202.7 578.7,200.4 577.6,200.0 578.7,198.7 575.6,198.4 574.3,196.9 573.2,197.6 573.7,199.7 574.3,202.0Z"/><path fill="#c9e6cf" d="M499.6,244.5 501.7,244.7 502.3,247.3 502.7,251.3 503.3,253.5 502.5,254.7 501.3,252.7 499.5,250.0 500.1,246.0Z"/><path fill="#9bd3a0" stroke-width="0.9" d="M477.1,169.6 478.5,168.0 482.3,167.7 485.2,167.5 486.1,168.1 483.6,170.4 480.7,170.8 478.3,170.8Z"/><path fill="#5aaa5e" stroke-width="0.9" d="M451.6,158.7 452.9,157.6 452.8,155.7 453.2,155.2 450.3,155.2 451.6,153.9 448.9,153.9 447.3,155.3 448.3,156.9 447.6,157.6 449.5,158.7ZM451.2,153.6 452.3,153.1 451.6,152.9ZM453.9,151.7 454.3,151.1 453.6,151.3Z"/><path fill="#9bd3a0" stroke-width="0.9" d="M480.9,171.2 483.6,170.4 484.3,171.7 485.6,172.7 486.3,174.4 485.5,175.6 483.1,176.1 482.3,175.2 481.6,174.3 481.6,173.3 480.9,172.1Z"/><path fill="#f3f9f1" d="M379.6,224.0 383.6,224.3 382.9,228.9 380.3,229.5 379.3,226.7Z"/><path fill="#c9e6cf" d="M342.4,202.8 345.6,201.2 348.5,201.2 352.7,203.1 354.7,203.9 356.7,204.9 355.3,205.5 352.0,205.6 350.9,203.3 346.9,202.4 344.7,202.4Z"/><path fill="#f3f9f1" d="M338.9,214.3 339.9,214.7 342.7,212.4 344.7,212.0 344.3,215.3 344.0,217.3 341.3,217.1 339.3,215.3Z"/><path fill="#5aaa5e" stroke-width="0.9" d="M447.2,159.9 444.8,159.5 445.7,158.5 444.3,158.7 442.3,160.0 442.5,161.1 441.9,162.8 442.9,163.2 444.9,162.9 447.2,162.4 447.6,161.1Z"/><path fill="#9bd3a0" d="M332.7,212.7 332.7,211.6 333.7,210.5 334.4,208.3 336.8,208.3 336.7,210.8 338.0,211.1 336.5,212.8 335.5,213.7 333.7,213.5Z"/><path fill="#c9e6cf" d="M504.3,212.9 504.9,209.3 507.1,208.0 508.4,211.3 510.9,213.6 513.1,215.1 512.1,215.3 508.9,212.7 505.6,212.9Z"/><path fill="#c9e6cf" stroke-width="0.9" d="M483.6,157.2 484.4,155.5 485.7,155.2 487.7,156.0 488.1,154.8 490.0,154.8 492.5,155.3 493.2,157.1 491.1,157.7 488.1,156.9Z"/><path fill="#c9e6cf" d="M515.6,177.1 517.9,176.3 520.3,176.3 521.6,178.4 520.8,180.8 519.6,180.3 517.6,180.0Z"/><path fill="#5aaa5e" stroke-width="0.9" d="M468.4,168.7 469.6,168.7 472.9,168.7 474.0,166.9 475.6,166.7 478.3,167.2 478.5,168.0 477.1,169.6 474.9,170.1 473.9,170.0 471.9,169.3 469.6,169.6Z"/><path fill="#5aaa5e" d="M624.5,181.6 626.8,180.5 628.3,183.3 628.0,185.1 625.6,185.9 624.0,186.0 624.3,184.0 623.7,182.7Z"/><path fill="#c9e6cf" d="M457.7,223.7 457.5,219.3 456.8,217.3 458.8,216.1 460.4,216.4 460.7,218.3 459.2,220.0 459.2,223.6Z"/><path fill="#c9e6cf" d="M508.9,174.1 512.9,174.3 515.6,175.1 517.9,176.3 515.6,177.1 513.6,177.2 510.9,176.7Z"/><path fill="#5aaa5e" stroke-width="0.9" d="M471.9,164.9 475.3,164.1 477.3,164.4 480.7,166.0 478.3,167.2 475.6,166.7 474.0,166.9Z"/><path fill="#c9e6cf" d="M336.5,212.8 338.0,211.1 340.9,210.8 344.7,212.0 342.7,212.4 339.9,214.7 338.9,214.3 337.6,213.5Z"/><path fill="#c9e6cf" d="M345.5,219.3 349.6,219.2 352.4,220.4 351.7,222.4 350.9,220.9 348.3,222.3 344.9,220.9 344.1,220.8Z"/><path fill="#c9e6cf" d="M502.3,192.7 502.9,190.0 503.1,188.4 503.6,188.9 507.3,187.5 507.9,189.1 504.9,190.0 506.3,191.3 505.6,192.0 504.3,192.7Z"/><path fill="#c9e6cf" stroke-width="0.9" d="M483.7,157.7 483.6,157.2 488.1,156.9 491.1,157.7 489.6,159.6 486.9,160.1 486.0,159.5 486.0,158.7 483.9,158.3Z"/><path fill="#5aaa5e" stroke-width="0.9" d="M445.7,182.4 443.7,182.7 443.9,180.4 442.9,180.3 443.9,178.0 443.7,175.9 444.7,176.1 446.4,177.1 446.3,179.2 445.6,180.7Z"/><path fill="#f3f9f1" d="M440.4,222.8 441.6,220.9 442.0,220.7 444.5,221.6 444.3,222.0 445.6,226.1 443.3,224.9Z"/><path fill="#9bd3a0" stroke-width="0.9" d="M473.7,171.7 476.0,171.3 477.6,170.0 478.3,170.8 480.7,170.8 480.9,171.2 480.9,172.1 477.3,172.0 476.7,172.4 478.9,174.4 480.3,175.3 478.3,174.7 475.6,173.1 474.7,171.6Z"/><path fill="#c9e6cf" stroke-width="0.9" d="M486.9,154.0 486.9,152.9 489.6,152.5 492.9,152.7 492.3,153.5 492.5,155.3 490.0,154.8 488.1,154.8 488.0,154.3Z"/><path fill="#5aaa5e" stroke-width="0.9" d="M466.4,158.0 467.1,155.9 469.7,155.1 469.6,156.7 470.1,156.9 469.2,158.0 468.5,158.9 467.2,158.8ZM470.3,157.7 472.4,157.3 472.1,158.7 470.5,158.4Z"/><path fill="#9bd3a0" d="M524.4,199.7 527.7,199.6 529.6,198.0 530.8,197.1 530.8,198.8 530.3,199.9 529.9,202.7 529.6,201.7Z"/><path fill="#c9e6cf" d="M438.0,219.3 439.6,218.8 440.7,218.7 441.3,219.7 441.6,220.9 440.4,222.8 438.4,221.9Z"/><path fill="#c9e6cf" stroke-width="0.9" d="M476.7,172.4 477.3,172.0 480.9,172.1 481.6,173.3 481.6,174.3 480.3,175.3 478.9,174.4Z"/><path fill="#9bd3a0" stroke-width="0.9" d="M480.7,166.0 485.7,166.5 485.2,167.5 482.3,167.7 478.5,168.0 478.3,167.2Z"/><path fill="#5aaa5e" stroke-width="0.9" d="M463.6,170.3 464.8,168.7 465.7,168.5 468.4,168.7 469.6,169.6 467.6,170.7 464.9,170.8Z"/><path fill="#c9e6cf" d="M562.0,218.9 562.5,218.9 564.8,222.0 563.9,223.9 562.3,224.0 561.9,221.3Z"/><path fill="#9bd3a0" d="M341.3,217.1 344.0,217.3 345.5,219.3 344.1,220.8 341.3,218.7Z"/><path fill="#f3f9f1" d="M383.6,224.3 386.3,225.6 386.8,226.4 382.9,228.9Z"/><path fill="#5aaa5e" stroke-width="0.9" d="M460.1,163.5 462.0,161.5 462.9,160.9 464.9,160.9 463.7,162.9 463.6,164.3 463.5,164.3 461.5,163.5Z"/><path fill="#c9e6cf" stroke-width="0.9" d="M491.1,167.7 492.9,167.6 494.5,168.5 495.6,170.0 493.2,171.3 493.2,170.0Z"/><path fill="#c9e6cf" d="M360.0,205.6 362.3,205.7 364.5,207.2 362.3,207.7 360.0,208.0Z"/><path fill="#c9e6cf" d="M356.3,207.5 358.5,205.5 360.0,205.6 360.0,208.0 356.4,207.9Z"/><path fill="#c9e6cf" d="M457.2,223.9 456.4,221.3 456.3,218.0 455.5,217.2 456.8,217.3 457.5,219.3 457.7,223.7Z"/><path fill="#5aaa5e" stroke-width="0.9" d="M458.9,163.9 460.1,163.5 461.5,163.5 463.5,164.3 463.6,164.3 464.1,166.0 463.7,166.0 462.3,165.3 461.2,164.9Z"/><path fill="#c9e6cf" d="M574.3,195.7 575.3,194.4 578.3,194.9 578.3,196.3 575.3,196.4Z"/><path fill="#c9e6cf" d="M433.3,215.5 437.3,215.2 437.5,216.7 435.6,217.3Z"/><path fill="#9bd3a0" d="M615.7,201.3 616.9,198.4 618.3,198.7 616.7,202.8Z"/><path fill="#f3f9f1" d="M664.9,241.3 667.6,242.7 668.9,244.7 665.6,243.1ZM668.9,244.0 670.3,244.7 669.6,245.3Z"/><path fill="#9bd3a0" stroke-width="0.9" d="M451.7,160.9 449.3,161.6 450.0,162.4 448.5,163.1 451.2,163.5 452.0,163.2 451.6,162.7Z"/><path fill="#c9e6cf" stroke-width="0.9" d="M481.5,176.1 483.1,176.1 483.6,177.9 482.3,179.1 481.5,178.3Z"/><path fill="#c9e6cf" d="M494.3,235.7 496.7,235.2 496.1,237.6 494.5,237.9Z"/><path fill="#c9e6cf" d="M494.3,233.9 496.5,233.3 496.7,235.2 494.3,235.7Z"/><path fill="#c9e6cf" d="M513.6,177.2 515.6,177.1 517.6,180.0 515.3,179.1Z"/><path fill="#c9e6cf" d="M491.6,271.3 493.6,270.1 494.8,271.3 492.9,272.8Z"/><path fill="#9bd3a0" d="M501.3,190.3 502.1,192.7 502.9,190.0 503.1,188.4 502.4,187.9 502.1,188.7Z"/><path fill="#9bd3a0" stroke-width="0.9" d="M473.9,171.2 473.9,170.0 474.9,170.1 477.1,169.6 477.6,170.0 476.0,171.3Z"/><path fill="#f3f9f1" d="M468.0,230.7 468.7,228.9 470.7,229.1 470.7,230.7Z"/><path fill="#c9e6cf" stroke-width="0.9" d="M483.1,176.1 485.5,175.6 486.3,176.9 483.6,177.5Z"/><path fill="#5aaa5e" stroke-width="0.9" d="M448.4,159.3 447.3,158.4 445.7,158.5 444.8,159.5 447.2,159.9Z"/><path fill="#f3f9f1" d="M512.1,215.3 513.1,215.1 513.5,216.7 512.7,217.5 511.3,217.3Z"/><path fill="#c9e6cf" d="M336.8,208.3 337.9,207.5 338.0,210.0 336.7,210.8Z"/><path fill="#9bd3a0" d="M517.6,193.2 520.1,194.0 519.6,192.5 519.2,191.9 518.3,192.1Z"/><path fill="#c9e6cf" stroke-width="0.9" d="M498.7,185.7 499.6,184.8 501.7,184.4 500.9,185.9Z"/><path fill="#c9e6cf" d="M496.9,266.7 498.3,266.7 498.3,268.4 496.9,268.3Z"/><path fill="#f3f9f1" d="M351.6,196.3 352.9,196.7 352.3,198.7ZM354.3,198.7 354.9,200.0 353.6,199.3Z"/><path fill="#c9e6cf" d="M335.5,213.7 336.5,212.8 337.6,213.5 338.5,214.4Z"/><path fill="#c9e6cf" stroke-width="0.9" d="M480.3,175.3 481.6,174.3 482.3,175.2 481.5,176.1Z"/><path fill="#c9e6cf" d="M433.2,213.9 437.2,214.0 437.2,214.4 433.3,214.4Z"/><path fill="#f3f9f1" d="M674.3,258.9 678.3,261.7 677.6,261.9 674.5,259.5Z"/><path fill="#c9e6cf" d="M502.4,187.9 503.3,187.6 504.4,185.9 503.5,185.9 502.9,186.8Z"/><path fill="#f3f9f1" d="M692.0,255.3 693.6,255.1 693.3,256.3 692.0,256.0Z"/><path fill="#f3f9f1" d="M622.3,244.0 625.2,243.2 622.9,244.7Z"/><path fill="#c9e6cf" d="M365.9,207.3 368.1,207.6 368.0,208.0 366.0,208.0Z"/><path fill="#9bd3a0" d="M523.3,198.9 524.4,198.4 524.0,197.2 523.3,198.0Z"/><path fill="#c9e6cf" d="M351.2,207.5 354.0,208.0 352.7,208.4Z"/><path fill="#9bd3a0" d="M607.7,225.9 609.3,225.3 609.2,226.4Z"/><path fill="#f3f9f1" d="M677.6,252.0 678.7,252.4 678.3,253.3Z"/><path fill="#f3f9f1" d="M226.5,250.3 227.2,250.5 226.8,250.8ZM256.1,255.3 256.7,255.7 256.3,255.9ZM218.3,254.7 218.9,255.1 218.3,255.3ZM222.0,260.1 222.3,260.4 221.9,260.4ZM245.7,229.5 246.0,229.3 245.9,229.7Z"/><path fill="#c9e6cf" d="M333.5,232.3 334.5,232.4 334.0,233.3Z"/><path fill="#f3f9f1" d="M529.3,238.0 529.7,238.3 529.5,238.4ZM513.3,247.3 513.7,247.7 513.5,248.0ZM532.1,258.8 532.5,259.1 532.3,259.3ZM529.3,260.0 529.9,260.1 529.6,260.4ZM553.6,226.4 553.7,226.8 553.5,226.8Z"/><path fill="#9bd3a0" d="M593.7,230.4 594.3,230.4 594.3,230.1 593.7,230.1Z"/></g></svg><!-- /MAP --><!-- CTRL --><svg class="a" style="left:195px;top:105px" width="40" height="100" viewBox="195 105 40 100">
<g fill="#0b470b">
<rect x="208" y="112" width="14" height="42" rx="7"/>
<rect x="201" y="125.3" width="28" height="14.5" rx="7.2"/>
<rect x="208" y="157.5" width="14" height="41.5" rx="7"/>
</g>
<g fill="#fff">
<path d="M215,114.8 L219.3,121.8 L210.7,121.8Z"/>
<path d="M215,150.5 L219.3,143.5 L210.7,143.5Z"/>
<path d="M203.8,132.5 L210.6,128.3 L210.6,136.7Z"/>
<path d="M226.2,132.5 L219.4,128.3 L219.4,136.7Z"/>
<rect x="211" y="164" width="8" height="2"/>
<rect x="214" y="161" width="2" height="8"/>
<rect x="211" y="190" width="8" height="2"/>
</g>
<circle cx="215" cy="178" r="6.3" fill="#5a5aa8"/>
<g fill="none" stroke="#c4c4f4" stroke-width="0.8">
<circle cx="215" cy="178" r="6"/>
<ellipse cx="215" cy="178" rx="2.8" ry="6"/>
<path d="M209,178H221M210,175H220M210,181H220"/>
</g>
</svg><!-- /CTRL -->

<div class="a" style="left:198px;top:359px;width:112px;height:15px;background:linear-gradient(90deg,#fff,#8cc48c 45%,#1f7f22 75%,#005a0a)"></div>
<div class="a" style="left:195px;top:358.5px;font-size:10px;color:#333">0</div>
<div class="a" style="left:262.5px;top:358.5px;font-size:10px;color:#1a1a1a">79,391</div>
<div class="a" style="left:187px;top:381px;width:548px;height:1px;background:#ececec"></div>
<div class="a th" style="left:203px;top:389px">Report View by Selection</div>
<div class="a blue" style="left:665px;top:389px;font-size:10.7px;font-weight:bold">Customize</div>

<div class="a" style="left:187px;top:409px;width:547px;height:31px;background:#f3f3f3;border-top:1px solid #e3e3e3"></div>
<div class="a" style="left:187px;top:440px;width:547px;height:18px;background:#f9f9f9;border-bottom:1px solid #ececec"></div>
<div class="a" style="left:187px;top:458px;width:547px;height:19px;background:#fcfcfc;border-bottom:1px solid #ececec"></div>
<div class="a" style="left:187px;top:477px;width:547px;height:19px;background:#fcfcfc;border-bottom:1px solid #ececec"></div>

<div class="a th" style="left:198px;top:412px;line-height:12px">Total:</div>
<div class="a th" style="left:204px;top:424px;line-height:12px">3</div>
<div class="a th" style="left:249px;top:418px">Research Fields</div>
<div class="a th" style="left:353px;top:412px;line-height:12px">Web of Science</div><div class="a th" style="left:359.5px;top:424px;line-height:12px">Documents</div>
<div class="a" style="left:462px;top:417.5px;font-size:10.6px;font-weight:bold;color:#3f6fa5">Cites</div><svg class="a" style="left:491px;top:422px" width="7" height="4"><path d="M0,0H6.5L3.25,3.8Z" fill="#5a8ed0"/></svg>
<div class="a th" style="left:538px;top:418px">Cites/Paper</div>
<div class="a th" style="left:642px;top:418px">Top Papers</div>

<div class="a num" style="left:200px;top:441px;width:31px">1</div>
<div class="a blue" style="left:249px;top:441px;font-size:10.5px;font-weight:bold">CHEMISTRY</div>
<div class="a num" style="left:380px;top:441px;width:55px">681</div>
<div class="a num" style="left:460px;top:441px;width:62px">8,344</div>
<div class="a num" style="left:550px;top:441px;width:62px">12.25</div>
<div class="a bar" style="top:440px"><div class="fill" style="width:75px"></div><span class="bn">6</span></div>

<div class="a num" style="left:200px;top:460px;width:31px">2</div>
<div class="a blue" style="left:249px;top:460px;font-size:10.5px;font-weight:bold">ENGINEERING</div>
<div class="a num" style="left:380px;top:460px;width:55px">567</div>
<div class="a num" style="left:460px;top:460px;width:62px">4,101</div>
<div class="a num" style="left:550px;top:460px;width:62px">7.23</div>
<div class="a bar" style="top:460px"><div class="fill" style="width:50px"></div><span class="bn" style="color:#555">4</span></div>

<div class="a num" style="left:200px;top:479px;width:31px">0</div>
<div class="a blue" style="left:249px;top:479px;font-size:10.5px;font-weight:bold">ALL FIELDS</div>
<div class="a num" style="left:380px;top:479px;width:55px">2,677</div>
<div class="a num" style="left:460px;top:479px;width:62px">26,008</div>
<div class="a num" style="left:550px;top:479px;width:62px">9.72</div>
<div class="a bar" style="top:479px"><div class="fill" style="width:75px"></div><span class="bn">27</span></div>
</body></html>
